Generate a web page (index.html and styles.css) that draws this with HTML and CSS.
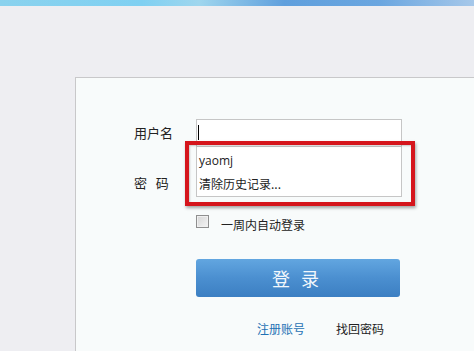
FILE: index.html
```html
<!DOCTYPE html>
<html lang="zh">
<head>
<meta charset="utf-8">
<link rel="stylesheet" href="styles.css">
</head>
<body>
<div class="topbar"></div>
<div class="panel">
  <div class="form">
    <div class="row row-user">
      <div class="label">用户名</div>
      <div class="field">
        <div class="input"><span class="caret"></span></div>
        <div class="dropdown">
          <div class="item latin">yaomj</div>
          <div class="item">清除历史记录...</div>
        </div>
        <div class="highlight"></div>
      </div>
    </div>
    <div class="row row-pass">
      <div class="label">密&nbsp;&nbsp;&nbsp;码</div>
      <div class="field"><div class="input"></div></div>
    </div>
    <div class="row row-remember">
      <div class="label"></div>
      <div class="remember"><span class="check"></span><span class="rtext">一周内自动登录</span></div>
    </div>
    <div class="row row-btn">
      <div class="label"></div>
      <div class="btn"><span>登</span><span>录</span></div>
    </div>
    <div class="row row-links">
      <div class="label"></div>
      <div class="links"><span class="reg">注册账号</span><span class="find">找回密码</span></div>
    </div>
  </div>
</div>
</body>
</html>
```
FILE: styles.css
```css
html, body {
  margin: 0;
  padding: 0;
  height: 100%;
  overflow: hidden;
}
body {
  background: #eeeef2;
  font-family: "Noto Sans CJK SC", sans-serif;
  color: #222;
}
.topbar {
  height: 6px;
  background: linear-gradient(90deg, #8ad2ee 0%, #7fd0f2 30%, #9fd6ee 42%, #5f9fdd 60%, #6aa6e0 80%, #a6c8ea 100%);
}
.panel {
  box-sizing: border-box;
  margin-left: 75px;
  margin-top: 71px;
  height: calc(100vh - 77px);
  background: #f8fbfb;
  border: 1px solid #c8c8ca;
  border-right: none;
  border-bottom: none;
  padding: 41px 0 0 58px;
}
.form {
  display: flex;
  flex-direction: column;
}
.row {
  display: flex;
  align-items: center;
}
.row-pass { margin-top: 22px; }
.row-remember { margin-top: 18px; height: 13px; }
.row-btn { margin-top: 31px; }
.row-links { margin-top: 24px; }
.label {
  width: 62px;
  flex: none;
  font-size: 13px;
  line-height: 16px;
  color: #222;
}
.field {
  position: relative;
  height: 28px;
}
.input {
  box-sizing: border-box;
  height: 28px;
  width: 206px;
  background: #fff;
  border: 1px solid #c6c6c6;
  position: relative;
}
.caret {
  position: absolute;
  left: 1px;
  top: 5px;
  width: 1px;
  height: 15px;
  background: #000;
}
.dropdown {
  position: absolute;
  left: 0;
  top: 28px;
  box-sizing: border-box;
  width: 206px;
  height: 50px;
  background: #fff;
  border: 1px solid #c6c6c6;
  border-top: none;
  padding-top: 6px;
  z-index: 2;
}
.item {
  font-size: 12px;
  line-height: 16px;
  height: 24px;
  padding-left: 2px;
  color: #222;
}
.item.latin {
  font-family: "Open Sans", "Noto Sans", sans-serif;
  font-size: 12px;
  height: 23px;
}
.highlight {
  position: absolute;
  left: -11px;
  top: 22px;
  width: 230px;
  height: 65px;
  box-sizing: border-box;
  border: 4px solid #d5151c;
  box-shadow: 1px 2px 3px rgba(0,0,0,0.35), inset 1px 1px 2px rgba(0,0,0,0.2);
  z-index: 3;
}
.remember {
  display: flex;
  align-items: center;
  gap: 12px;
  font-size: 12px;
  line-height: 16px;
  height: 13px;
}
.rtext { position: relative; top: 3px; }
.check {
  box-sizing: border-box;
  width: 13px;
  height: 13px;
  border: 1px solid #8f8f8f;
  background: linear-gradient(135deg, #d6d6d6, #f4f4f4);
  box-shadow: inset 0 0 0 1px #f0f0f0;
  flex: none;
}
.btn {
  box-sizing: border-box;
  width: 204px;
  height: 38px;
  border-radius: 3px;
  background: linear-gradient(180deg, #62a6e0 0%, #4b8fd0 50%, #3c7fc2 100%);
  color: #f2f7fc;
  font-size: 18px;
  line-height: 38px;
  display: flex;
  justify-content: center;
  gap: 11px;
  padding-right: 5px;
}
.links {
  display: flex;
  font-size: 12px;
  line-height: 16px;
  padding-left: 61px;
  gap: 31px;
}
.reg { color: #1f72b4; }
.find { color: #222; }
```
